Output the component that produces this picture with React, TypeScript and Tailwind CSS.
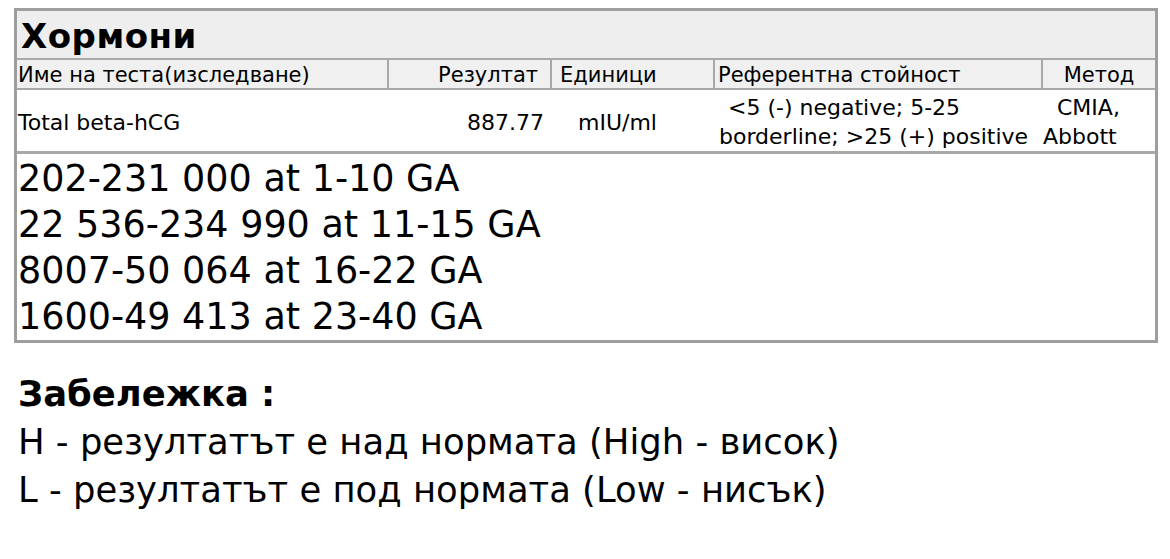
export default function App() {
  const ranges = [
    "202-231 000 at 1-10 GA",
    "22 536-234 990 at 11-15 GA",
    "8007-50 064 at 16-22 GA",
    "1600-49 413 at 23-40 GA",
  ]

  return (
    <div className="w-[1170px] h-[559px] bg-white text-black pt-[8px] pl-[14px] font-['DejaVu_Sans',sans-serif]">
      <div className="w-[1144px] border-[3px] border-[#9e9e9e]">
        <div className="h-[47px] bg-[#eeeeee] pl-[4px] pt-[2px] flex items-center text-[34px] font-bold leading-none tracking-[0.5px]">
          Хормони
        </div>

        <div className="grid grid-cols-[372px_163px_163px_328px_1fr] bg-[#f0f0f0] border-t-2 border-[#a8a8a8] h-[30px] text-[21px] leading-none">
          <div className="flex items-center pt-[2px] pl-[1px] border-r-2 border-[#a8a8a8]">Име на теста(изследване)</div>
          <div className="flex items-center justify-end pt-[2px] pr-[12px] border-r-2 border-[#a8a8a8]">Резултат</div>
          <div className="flex items-center pt-[2px] pl-[8px] border-r-2 border-[#a8a8a8]">Единици</div>
          <div className="flex items-center pt-[2px] pl-[3px] border-r-2 border-[#a8a8a8]">Референтна стойност</div>
          <div className="flex items-center justify-center pt-[2px]">Метод</div>
        </div>

        <div className="grid grid-cols-[372px_163px_163px_328px_1fr] border-t-2 border-[#a8a8a8] h-[63px] pt-[3px] text-[22px] leading-[29px]">
          <div className="flex items-center pl-[1px]">Total beta-hCG</div>
          <div className="flex items-center justify-end pr-[8px]">887.77</div>
          <div className="flex items-center pl-[26px]">mIU/ml</div>
          <div className="flex flex-col justify-center pl-[4px]">
            <span className="pl-[9px]">&lt;5 (-) negative; 5-25</span>
            <span>borderline; &gt;25 (+) positive</span>
          </div>
          <div className="flex flex-col justify-center">
            <span className="pl-[14px]">CMIA,</span>
            <span>Abbott</span>
          </div>
        </div>

        <div className="border-t-[3px] border-[#a8a8a8] pt-[2px] text-[36.5px] leading-[46px]">
          {ranges.map((r) => (
            <div key={r} className="pl-[1px]">
              {r}
            </div>
          ))}
        </div>
      </div>

      <div className="mt-[27px] pl-[4px] text-[35.4px] leading-[48px]">
        <div className="font-bold">Забележка :</div>
        <div>Н - резултатът е над нормата (High - висок)</div>
        <div>L - резултатът е под нормата (Low - нисък)</div>
      </div>
    </div>
  )
}
